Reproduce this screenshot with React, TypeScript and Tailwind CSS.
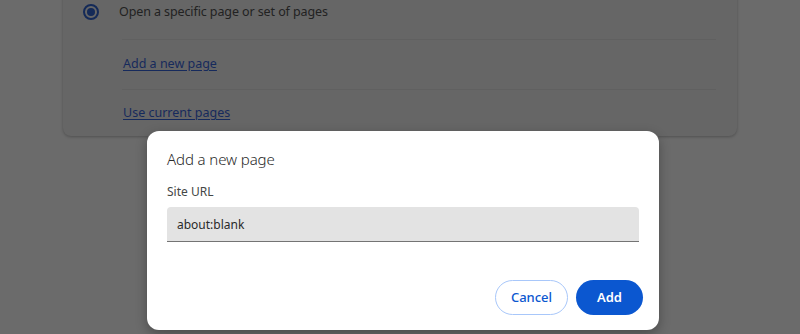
export default function App() {
  return (
    <div
      className="relative h-[334px] w-[800px] overflow-hidden bg-[#6b6b6b]"
      style={{ fontFamily: '"Noto Sans", "Open Sans", sans-serif' }}
    >
      {/* settings card, dimmed behind the dialog */}
      <div className="mx-[63px] -mt-[16px] h-[152px] rounded-lg bg-[#666666] shadow-[0_1px_3px_rgba(0,0,0,0.25)]">
        <div className="flex h-[55px] items-center pt-[1px]">
          <div className="ml-[20px] flex h-[16px] w-[16px] items-center justify-center rounded-full border-[2px] border-[#142a58]">
            <div className="h-[8px] w-[8px] rounded-full bg-[#142a58]" />
          </div>
          <span className="ml-[20px] text-[12.5px] tracking-[-0.1px] text-[#222222]">Open a specific page or set of pages</span>
        </div>
        <div className="ml-[59px] mr-[21px] border-t border-[#606060]" />
        <div className="flex h-[49px] items-center pl-[60px]">
          <a className="text-[12.5px] text-[#162a5c] underline underline-offset-2">Add a new page</a>
        </div>
        <div className="ml-[59px] mr-[21px] border-t border-[#606060]" />
        <div className="flex h-[47px] items-center pl-[60px]">
          <a className="text-[12.5px] text-[#162a5c] underline underline-offset-2">Use current pages</a>
        </div>
      </div>

      {/* dialog */}
      <div className="absolute left-[147px] top-[131px] flex h-[199px] w-[512px] flex-col rounded-xl bg-white px-[20px] pt-[18px] shadow-[0_4px_12px_rgba(0,0,0,0.3)]">
        <h2 className="text-[15px] leading-[20px] font-light tracking-[-0.1px] text-[#2a2a2a]">Add a new page</h2>
        <label className="mt-[15px] text-[12px] leading-[16px] text-[#444746]">Site URL</label>
        <div className="mt-[7px] flex h-[35px] items-center rounded-t-[4px] border-b border-[#747474] bg-[#e3e3e3] px-[10px] pt-[2px]">
          <span className="text-[12px] text-[#2a2a2a]">about:blank</span>
        </div>
        <div className="mt-auto mb-[15px] -mr-[4px] flex justify-end gap-[8px]">
          <button className="h-[35px] w-[73px] rounded-full border border-[#a8c7fa] text-[13px] font-medium text-[#0b57d0]">
            Cancel
          </button>
          <button className="h-[35px] w-[67px] rounded-full bg-[#0b57d0] text-[13px] font-semibold text-white">
            Add
          </button>
        </div>
      </div>
    </div>
  )
}
